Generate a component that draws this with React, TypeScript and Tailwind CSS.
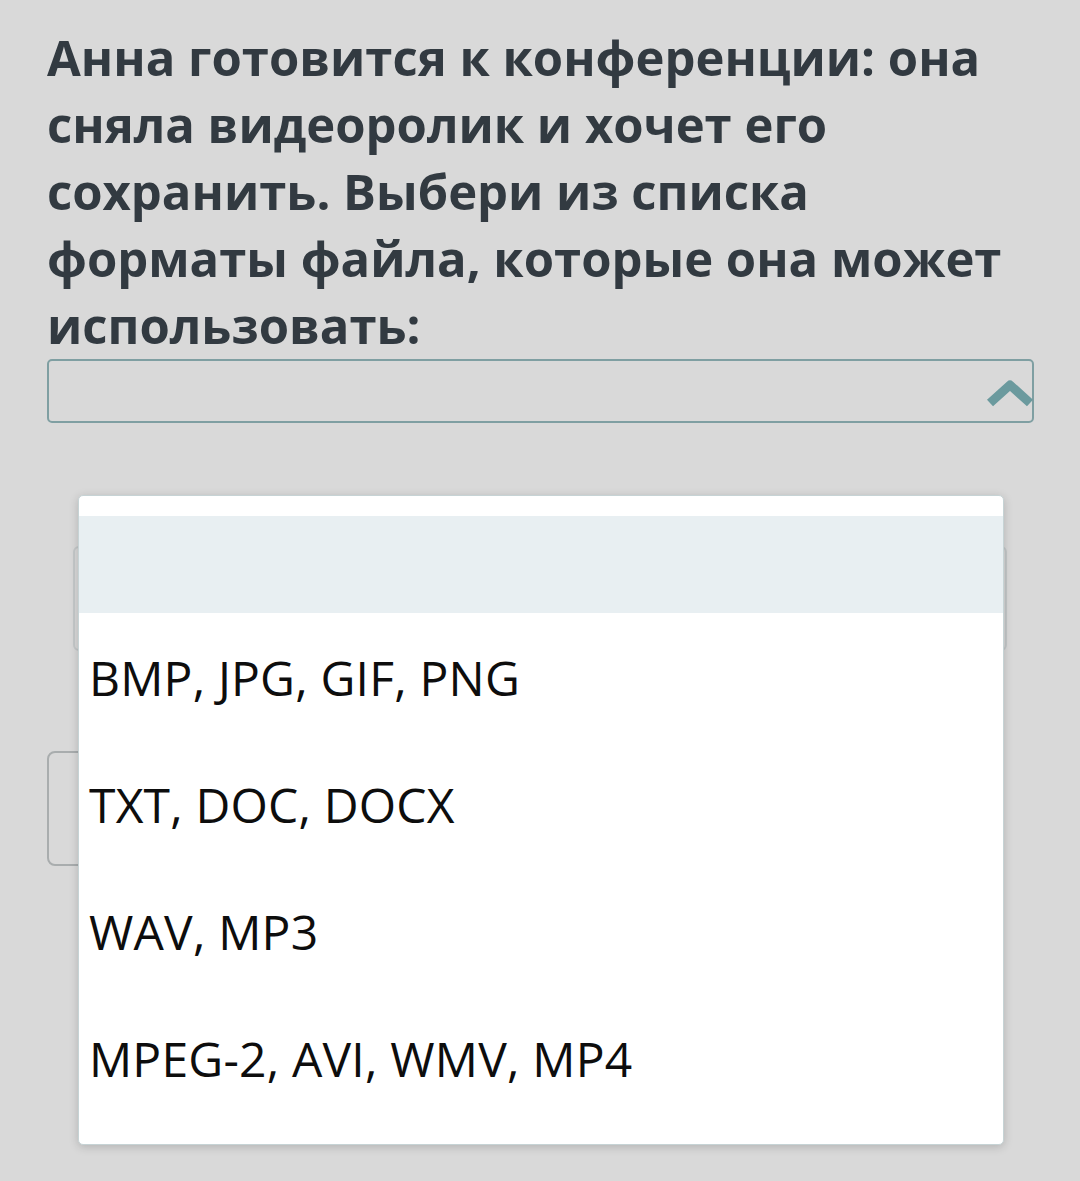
const options = ["", "BMP, JPG, GIF, PNG", "TXT, DOC, DOCX", "WAV, MP3", "MPEG-2, AVI, WMV, MP4"];

export default function App() {
  return (
    <div className="relative min-h-[1181px] w-[1080px] overflow-hidden bg-[#d9d9d9] font-['Open_Sans','Noto_Sans',sans-serif]">
      <div className="pl-[47px] pr-[40px] pt-[24px]">
        <h1 className="text-[49px] font-bold leading-[67px] text-[#323a41]">
          Анна готовится к конференции: она сняла видеоролик и хочет его сохранить. Выбери из списка форматы файла, которые она может использовать:
        </h1>

        {/* select */}
        <div className="flex h-[64px] w-[987px] items-center justify-end rounded-[5px] border-2 border-[#7f9fa2]">
          <svg width="48" height="34" viewBox="0 0 48 34" className="mt-[4px] -mr-[2px]">
            <polyline points="4,27 24,9 44,27" fill="none" stroke="#6b9a9e" strokeWidth="9" strokeLinejoin="round" strokeLinecap="butt" />
          </svg>
        </div>

        {/* content under the open menu */}
        <div className="ml-[26px] mt-[123px] h-[105px] w-[934px] rounded-[6px] border-2 border-[#c4c8c9]" />
        <div className="mt-[100px] h-[115px] w-[320px] rounded-[8px] border-2 border-[#a9adae]" />
      </div>

      {/* open dropdown */}
      <div className="absolute left-[78px] top-[495px] w-[926px] rounded-[5px] border border-[#c6d3d5] bg-white pb-[23px] pt-[20px] shadow-[0_2px_10px_rgba(0,0,0,0.18)]">
        {options.map((o, i) => (
          <div
            key={i}
            className={
              i === 0
                ? "h-[97px] bg-[#e8eff2]"
                : "flex h-[127px] items-center pl-[10px] pt-[3px] text-[48px] tracking-[0.2px] text-[#0d0d0d] leading-none"
            }
          >
            {o}
          </div>
        ))}
      </div>
    </div>
  );
}
